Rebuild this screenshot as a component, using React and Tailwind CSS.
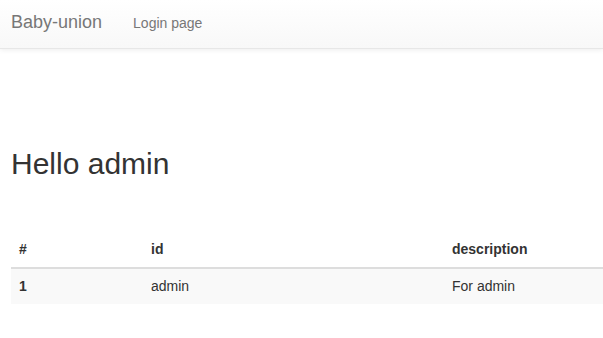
export default function App() {
  return (
    <div className="min-h-[338px] bg-white text-[14px] text-[#333]" style={{ fontFamily: '"Liberation Sans", Arial, sans-serif' }}>
      <nav className="h-[49px] border-b border-[#e7e7e7] bg-gradient-to-b from-white to-[#f8f8f8] shadow-[0_1px_5px_rgba(0,0,0,0.075)] flex items-baseline pt-[12px] px-[11px]">
        <span className="text-[18px] text-[#777] leading-[20px]">Baby-union</span>
        <span className="ml-[31px] text-[14px] text-[#777] leading-[20px]">Login page</span>
      </nav>
      <div className="pl-[11px]">
        <h1 className="mt-[98px] text-[30px] leading-[33px] text-[#333]">Hello admin</h1>
        <table className="mt-[51px] w-full border-collapse text-[14px]">
          <thead>
            <tr className="border-b-2 border-[#ddd]">
              <th className="w-[132px] text-left font-bold px-[8px] py-[8px] leading-[20px]">#</th>
              <th className="w-[301px] text-left font-bold px-[8px] py-[8px] leading-[20px]">id</th>
              <th className="text-left font-bold px-[8px] py-[8px] leading-[20px]">description</th>
            </tr>
          </thead>
          <tbody>
            <tr className="bg-[#f9f9f9]">
              <td className="font-bold px-[8px] py-[8px] leading-[19px]">1</td>
              <td className="px-[8px] py-[8px] leading-[19px]">admin</td>
              <td className="px-[8px] py-[8px] leading-[19px]">For admin</td>
            </tr>
          </tbody>
        </table>
      </div>
    </div>
  );
}
